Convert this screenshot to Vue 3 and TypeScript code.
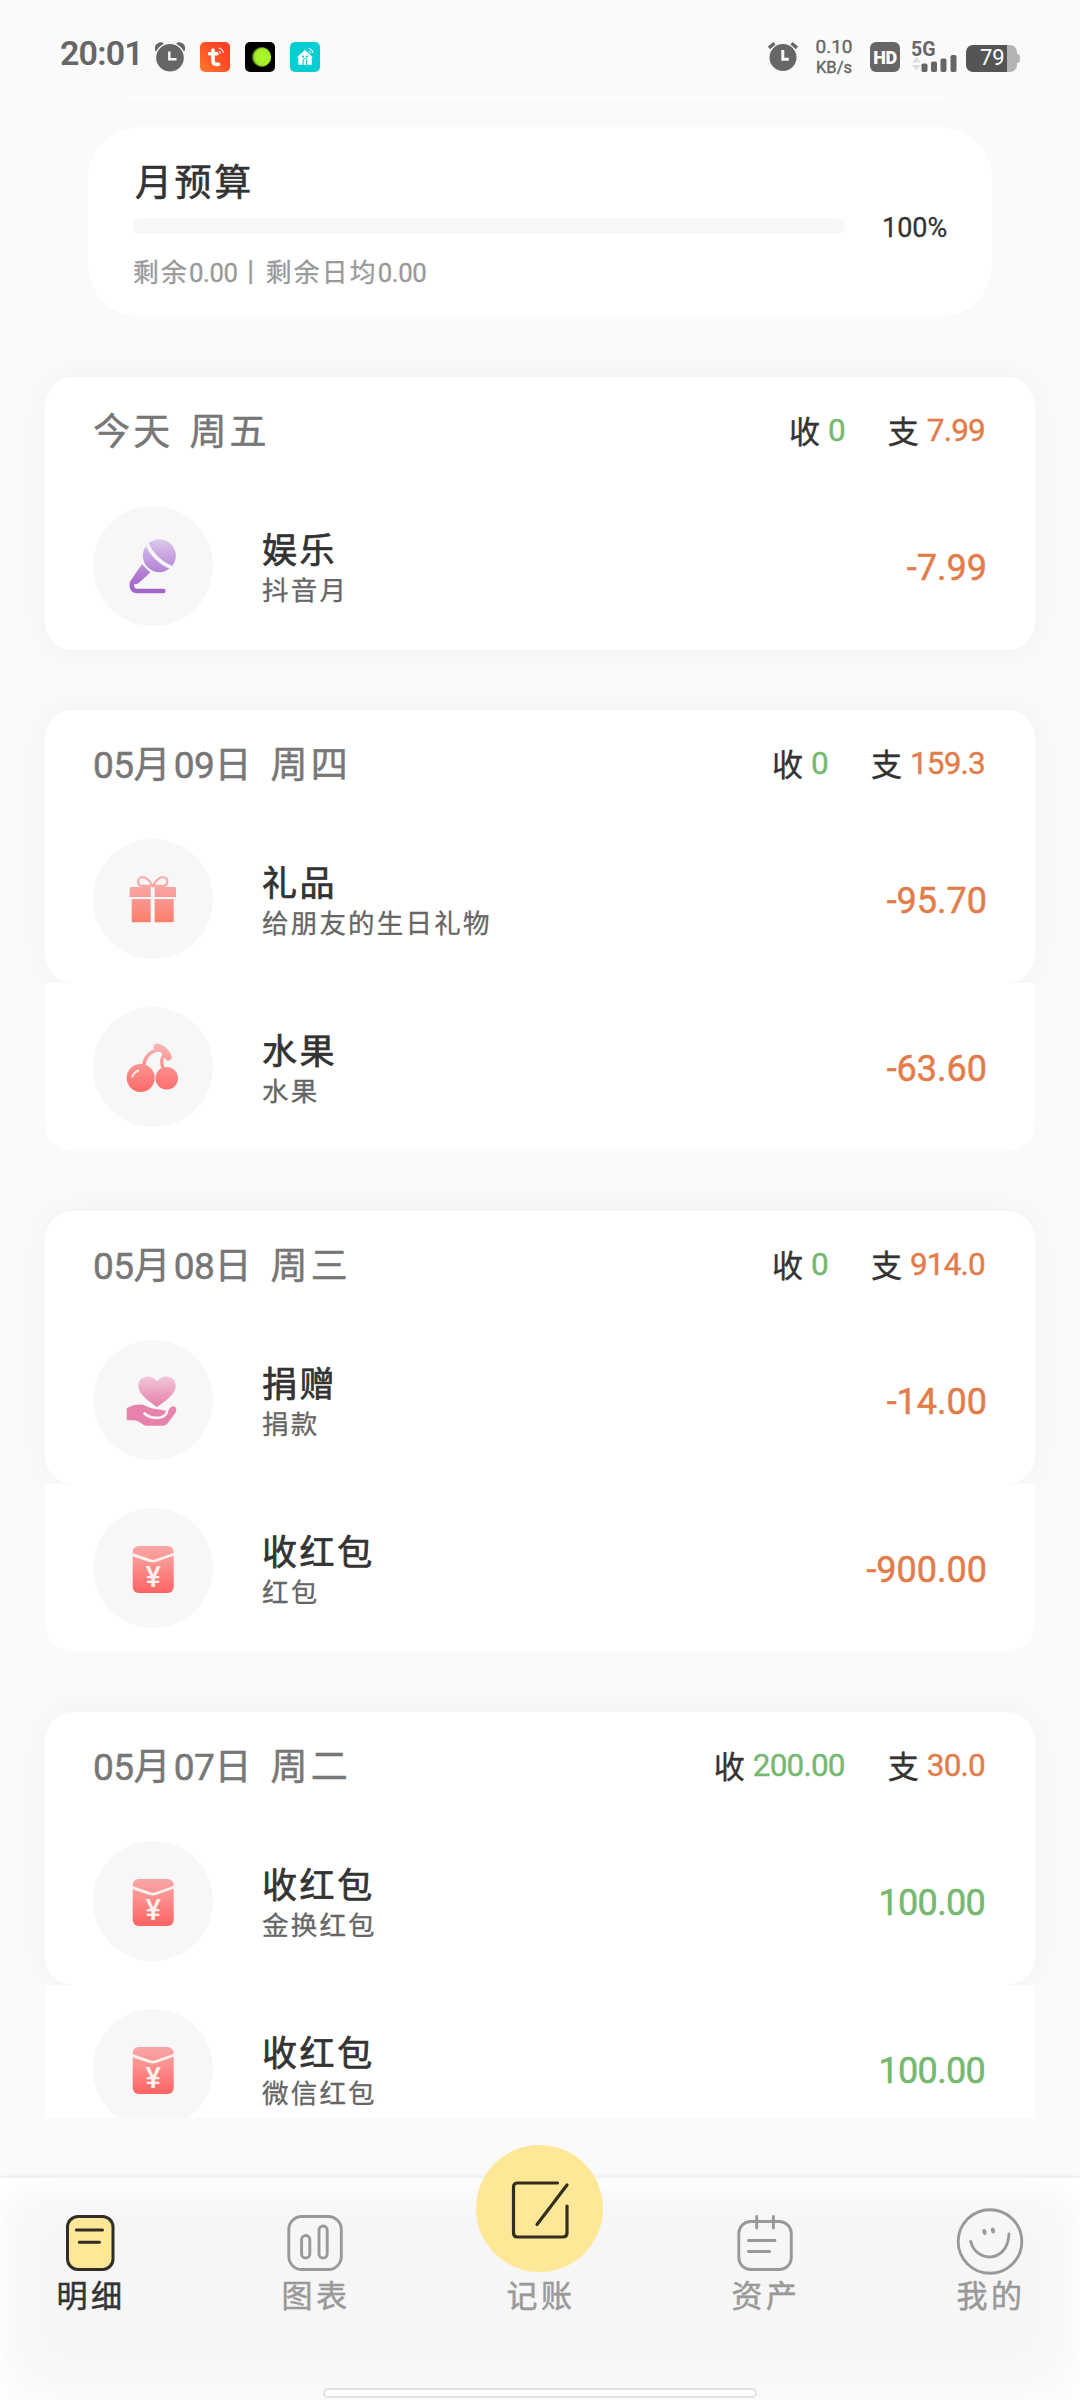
<script setup lang="ts">
import { h } from 'vue'
import type { FunctionalComponent } from 'vue'

type IconName = 'mic' | 'gift' | 'cherry' | 'donate' | 'packet'

interface Entry {
  icon: IconName
  name: string
  note: string
  amount: string
}

interface Day {
  date: string
  income: string
  expense: string
  entries: Entry[]
}

const days: Day[] = [
  {
    date: '今天 周五',
    income: '0',
    expense: '7.99',
    entries: [{ icon: 'mic', name: '娱乐', note: '抖音月', amount: '-7.99' }],
  },
  {
    date: '05月09日 周四',
    income: '0',
    expense: '159.3',
    entries: [
      { icon: 'gift', name: '礼品', note: '给朋友的生日礼物', amount: '-95.70' },
      { icon: 'cherry', name: '水果', note: '水果', amount: '-63.60' },
    ],
  },
  {
    date: '05月08日 周三',
    income: '0',
    expense: '914.0',
    entries: [
      { icon: 'donate', name: '捐赠', note: '捐款', amount: '-14.00' },
      { icon: 'packet', name: '收红包', note: '红包', amount: '-900.00' },
    ],
  },
  {
    date: '05月07日 周二',
    income: '200.00',
    expense: '30.0',
    entries: [
      { icon: 'packet', name: '收红包', note: '金换红包', amount: '100.00' },
      { icon: 'packet', name: '收红包', note: '微信红包', amount: '100.00' },
    ],
  },
]

// Splits a string into Latin and Chinese runs, so only the Chinese runs are tracked out.
const Mixed: FunctionalComponent<{ text: string }> = (props) =>
  h(
    'span',
    { style: 'white-space: pre' },
    (props.text.match(/[\u4e00-\u9fff]+|[^\u4e00-\u9fff]+/g) ?? []).map((run) =>
      h('span', { class: /[\u4e00-\u9fff]/.test(run) ? 'run-cjk' : run === ' ' ? 'run-gap' : 'run-latin' }, run),
    ),
  )
Mixed.props = ['text']
</script>

<template>
  <div class="screen">
    <svg width="0" height="0" class="defs" aria-hidden="true">
      <defs>
        <linearGradient id="g-mic" gradientUnits="userSpaceOnUse" x1="0" y1="33" x2="0" y2="88">
          <stop offset="0" stop-color="#dccaea" /><stop offset=".45" stop-color="#bd93dc" /><stop offset=".75" stop-color="#aa70d0" /><stop offset="1" stop-color="#a162c6" />
        </linearGradient>
        <linearGradient id="g-gift" gradientUnits="userSpaceOnUse" x1="0" y1="37" x2="0" y2="84">
          <stop offset="0" stop-color="#f7b4b2" /><stop offset=".45" stop-color="#f99a94" /><stop offset="1" stop-color="#fd7d6b" />
        </linearGradient>
        <linearGradient id="g-cherry" gradientUnits="userSpaceOnUse" x1="0" y1="36" x2="0" y2="85">
          <stop offset="0" stop-color="#f8b9b7" /><stop offset=".5" stop-color="#fb8f8c" /><stop offset="1" stop-color="#ff6a6a" />
        </linearGradient>
        <linearGradient id="g-heart" gradientUnits="userSpaceOnUse" x1="0" y1="36" x2="0" y2="68">
          <stop offset="0" stop-color="#f1c8db" /><stop offset="1" stop-color="#e67ca8" />
        </linearGradient>
        <linearGradient id="g-packet" gradientUnits="userSpaceOnUse" x1="0" y1="38" x2="0" y2="85">
          <stop offset="0" stop-color="#f9a5a4" /><stop offset=".35" stop-color="#fa9492" /><stop offset="1" stop-color="#ff6363" />
        </linearGradient>
        <linearGradient id="g-tuya" x1="0" y1="1" x2="1" y2="0">
          <stop offset="0" stop-color="#ff7a2a" /><stop offset=".5" stop-color="#ff5226" /><stop offset="1" stop-color="#f93a28" />
        </linearGradient>
        <radialGradient id="g-lime" cx=".6" cy=".5" r=".5">
          <stop offset="0" stop-color="#adf82c" /><stop offset=".78" stop-color="#a4ec2a" /><stop offset="1" stop-color="#a4ec2a" stop-opacity="0" />
        </radialGradient>
      </defs>
    </svg>

    <header class="status">
      <div class="status-left">
        <span class="clock">20:01</span>
        <svg width="30" height="30" viewBox="0 0 30 30">
          <path d="M.8 9.500A6 6 0 0 1 9 1.200ZM29.200 9.500A6 6 0 0 0 21 1.200Z" fill="#666" />
          <circle cx="15" cy="15.700" r="14.400" fill="#666" stroke="#fafafa" stroke-width="1.200" />
          <path d="M14.300 9.500V17.300H21.500" fill="none" stroke="#fafafa" stroke-width="2.400" />
        </svg>
        <svg width="30" height="30" viewBox="0 0 30 30">
          <rect width="30" height="30" rx="5" fill="url(#g-tuya)" />
          <path d="M13 8V19.500Q13 23 18.500 22.300M9.500 11.800H17" fill="none" stroke="#fff" stroke-width="3.600" stroke-linecap="round" />
          <path d="M18.800 9.300A2.600 2.600 0 0 1 20.600 11.500M18.800 6A6 6 0 0 1 23.400 11" fill="none" stroke="#fff" stroke-width="1.200" />
        </svg>
        <svg width="30" height="30" viewBox="0 0 30 30">
          <rect width="30" height="30" rx="5" fill="#000" />
          <circle cx="14.500" cy="15" r="10.500" fill="url(#g-lime)" opacity=".6" />
          <circle cx="15.800" cy="15" r="10.400" fill="url(#g-lime)" />
        </svg>
        <svg width="30" height="30" viewBox="0 0 30 30">
          <rect width="30" height="30" rx="5" fill="#08cdd2" />
          <path d="M15 8 6.800 15.200H8.300V22.800H12.600V18.300A2.300 2.300 0 0 1 17.200 18.300V22.800H21.800V15.200H23Z" fill="#fff" />
          <circle cx="13" cy="14.600" r="1.100" fill="#08cdd2" /><circle cx="16.800" cy="14.600" r="1.100" fill="#08cdd2" />
          <path d="M14.900 17V23" stroke="#fff" stroke-width="2.400" />
          <path d="M18.800 9.300A2.600 2.600 0 0 1 20.600 11.500M18.800 6.500A5.500 5.500 0 0 1 23 11" fill="none" stroke="#fff" stroke-width="1.200" />
        </svg>
      </div>
      <div class="status-right">
        <svg width="30" height="30" viewBox="0 0 30 30">
          <circle cx="15" cy="16.500" r="13.500" fill="#666" />
          <path d="M1 7 6.500 2.200M29 7 23.500 2.200" stroke="#666" stroke-width="3.400" />
          <path d="M14.800 9V18.300H20.800" fill="none" stroke="#fafafa" stroke-width="3" />
        </svg>
        <div class="speed"><span>0.10</span><span class="unit">KB/s</span></div>
        <span class="hd">HD</span>
        <div class="signal">
          <span>5G</span>
          <svg width="46" height="17" viewBox="0 0 46 17">
            <path d="M0 7.500 4.500 2 9 7.500ZM0 10 4.500 15.500 9 10Z" fill="#ddd" />
            <g fill="#666"><rect x="9.500" y="8.500" width="6" height="8.500" rx="1.800" /><rect x="19" y="6.500" width="6" height="10.500" rx="1.800" /><rect x="28.500" y="3.500" width="6" height="13.500" rx="1.800" /><rect x="38.500" y="0" width="6" height="17" rx="1.800" /></g>
          </svg>
        </div>
        <div class="battery"><span class="level">79</span></div>
      </div>
    </header>
    <div class="rule"></div>

    <main class="scroll">
      <section class="budget">
        <h2><Mixed text="月预算" /></h2>
        <div class="meter-row">
          <div class="meter"></div>
          <span>100%</span>
        </div>
        <p><Mixed text="剩余0.00丨剩余日均0.00" /></p>
      </section>

      <section v-for="day in days" :key="day.date" class="day">
        <div class="lead">
          <div class="day-head">
            <span class="date"><Mixed :text="day.date" /></span>
            <span class="label">收</span><span class="sum in">{{ day.income }}</span>
            <span class="label out-label">支</span><span class="sum out">{{ day.expense }}</span>
          </div>
        </div>
        <div v-for="(entry, i) in day.entries" :key="i" class="entry" :class="{ first: i === 0 }">
          <svg class="badge" width="120" height="120" viewBox="0 0 120 120">
            <circle cx="60" cy="60" r="60" fill="#f7f7f7" />
            <g v-if="entry.icon === 'mic'">
              <circle cx="66.300" cy="49.700" r="16.500" fill="url(#g-mic)" />
              <path d="M53.500 37Q61 54.500 79 61.800" fill="none" stroke="#f7f7f7" stroke-width="3.600" />
              <path d="M49 58.300 57.300 66.500 46.500 76.300Q43.500 79.300 40.300 77.500L38.500 75.500Q39 72.500 42 68Z" fill="url(#g-mic)" />
              <path d="M40.500 74.500C37.500 78 38.300 85 44 85H70.300" fill="none" stroke="url(#g-mic)" stroke-width="4.600" stroke-linecap="round" />
            </g>
            <g v-else-if="entry.icon === 'gift'">
              <path d="M59.700 47C55 39 51 37.800 48.500 38.300C43.500 39.500 44.300 46.500 49 46.800H70.500C75 46.500 76 39.500 71 38.300C68.500 37.800 64.500 39 59.700 47Z" fill="none" stroke="url(#g-gift)" stroke-width="2.200" />
              <path d="M38 48H57.700V58H36.700V49.300Q36.700 48 38 48ZM61.700 48H81.700Q83 48 83 49.300V58H61.700ZM38.700 60H57.700V83.300H39.700Q38.700 83.300 38.700 82.300ZM61.700 60H80.700V82.300Q80.700 83.300 79.700 83.300H61.700Z" fill="url(#g-gift)" />
            </g>
            <g v-else-if="entry.icon === 'cherry'">
              <path d="M50.500 59C52 50 57 44 65.500 43M70.300 62Q66.800 54 71 47.500" fill="none" stroke="url(#g-cherry)" stroke-width="3.400" />
              <path d="M64 40Q71.500 41.500 75.300 50" fill="none" stroke="url(#g-cherry)" stroke-width="7" stroke-linecap="round" />
              <circle cx="47.700" cy="71" r="14" fill="url(#g-cherry)" /><circle cx="73.700" cy="71.300" r="11.300" fill="url(#g-cherry)" />
              <path d="M39.300 69.500Q41 65.300 45.300 63.600" fill="none" stroke="#fbe9e8" stroke-width="2" stroke-linecap="round" />
            </g>
            <g v-else-if="entry.icon === 'donate'">
              <path d="M64 67C56 61.500 45.300 54 45.300 46C45.300 36 58 33 64 41.500C70 33 82.700 36 82.700 46C82.700 54 72 61.500 64 67Z" fill="url(#g-heart)" />
              <path d="M35 67.500C41 64.500 48 63.500 53 66Q58 68.500 66 69.500Q72.500 70.500 74.500 71L78 67Q81 65 83 68Q84 70.500 82.300 73L74.500 83.500Q72.500 85.800 70 85.800H54Q51 85.800 48.500 83.500Q45.500 80.500 40 80.300H34.800Q33.700 80.300 33.700 79V69.500Q33.700 68 35 67.500Z" fill="#e782ac" />
              <path d="M51.500 73.500Q57 78.500 66 77.800Q74 77 74.500 69" fill="none" stroke="#f7f7f7" stroke-width="2.600" stroke-linecap="round" />
            </g>
            <g v-else>
              <rect x="39.700" y="38" width="41" height="47" rx="6" fill="url(#g-packet)" />
              <path d="M39 46.500 57 52.500Q60 53.800 63 52.500L81.500 46" fill="none" stroke="#fdf0ef" stroke-width="2.900" />
              <text x="60.200" y="78.700" text-anchor="middle" class="yen">¥</text>
            </g>
          </svg>
          <div class="words">
            <span class="name">{{ entry.name }}</span>
            <span class="note">{{ entry.note }}</span>
          </div>
          <span class="amount" :class="entry.amount.startsWith('-') ? 'out' : 'in'">{{ entry.amount }}</span>
        </div>
      </section>
    </main>

    <nav class="tabs">
      <div class="tab active">
        <svg width="68" height="68" viewBox="0 0 68 68">
          <rect x="11.500" y="9.500" width="45.500" height="53" rx="10.500" fill="#fee797" stroke="#302e26" stroke-width="3" />
          <path d="M20.300 23H46.500M23.300 35.300H43.500" stroke="#302e26" stroke-width="3" stroke-linecap="round" />
        </svg>
        <span>明细</span>
      </div>
      <div class="tab">
        <svg width="68" height="68" viewBox="0 0 68 68" fill="none" stroke="#999" stroke-width="2.900">
          <rect x="7.800" y="9.500" width="52.500" height="53" rx="13" /><rect x="20.600" y="28.500" width="8.200" height="22.500" rx="4.100" /><rect x="38" y="19" width="8.200" height="32" rx="4.100" />
        </svg>
        <span>图表</span>
      </div>
      <div class="tab">
        <div class="fab">
          <svg width="60" height="60" viewBox="0 0 60 60" fill="none" stroke="#332f1f" stroke-width="3.200" stroke-linecap="round" stroke-linejoin="round">
            <path d="M47.500 4H7.500Q3.500 4 3.500 8V54Q3.500 58 7.500 58H53Q57 58 57 54V27M57 6 27 45.500" />
          </svg>
        </div>
        <span>记账</span>
      </div>
      <div class="tab">
        <svg width="68" height="68" viewBox="0 0 68 68" fill="none" stroke="#999" stroke-width="2.900">
          <rect x="7.800" y="14.500" width="52.500" height="48" rx="12" /><path d="M25.700 9.500V21M42.400 9.500V21M17.500 33.500H44M17.500 44.500H38.500" stroke-linecap="round" />
        </svg>
        <span>资产</span>
      </div>
      <div class="tab">
        <svg width="68" height="68" viewBox="0 0 68 68" fill="none" stroke="#999" stroke-width="2.900" stroke-linecap="round">
          <circle cx="34" cy="34.500" r="31.800" />
          <path d="M14.800 34.500C19.500 55.500 51.500 57 53 27" />
          <ellipse cx="28.500" cy="25" rx="1.200" ry="2.200" transform="rotate(-12 28.500 25)" fill="#999" stroke-width="1.600" /><ellipse cx="37" cy="23.500" rx="1.200" ry="2.200" transform="rotate(-12 37 23.500)" fill="#999" stroke-width="1.600" />
        </svg>
        <span>我的</span>
      </div>
      <div class="home-bar"></div>
    </nav>
  </div>
</template>

<style>
body {
  background: #fafafa;
}
.run-cjk {
  letter-spacing: var(--track, 3px);
}
.run-latin {
  letter-spacing: var(--latin-track, 0);
}
.run-gap {
  display: inline-block;
  width: 16px;
}
</style>

<style scoped>
.screen {
  width: 1080px;
  height: 2400px;
  display: flex;
  flex-direction: column;
  overflow: hidden;
  background: #fafafa;
  color: #333;
  font-family: Roboto, 'Noto Sans CJK SC', sans-serif;
}
.screen svg {
  display: block;
  flex: none;
}
.defs {
  position: absolute;
}

.status {
  height: 96px;
  box-sizing: border-box;
  padding: 41px 60px 0 60px;
  display: flex;
  justify-content: space-between;
  align-items: flex-start;
  color: #666;
}
.status-left {
  display: flex;
  gap: 15px;
}
.clock {
  width: 80px;
  font-size: 34px;
  font-weight: 600;
  line-height: 25px;
  letter-spacing: -0.8px;
  white-space: nowrap;
}
.status-left svg {
  margin-top: 1px;
}
.status-right {
  display: flex;
}
.status-right > svg {
  margin-right: 18px;
}
.speed {
  width: 36px;
  margin: -4px 18px 0 0;
  display: flex;
  flex-direction: column;
  align-items: center;
  font-size: 19px;
  line-height: 20px;
  -webkit-text-stroke: 0.4px currentColor;
}
.speed .unit {
  font-size: 16.5px;
  line-height: 22px;
}
.hd {
  width: 30px;
  height: 30px;
  margin: 1px 12px 0 0;
  border-radius: 6px;
  background: #666;
  color: #fff;
  font-size: 18px;
  font-weight: 900;
  line-height: 31px;
  text-align: center;
  letter-spacing: -0.5px;
}
.signal {
  width: 46px;
  margin-right: 8px;
}
.signal span {
  display: block;
  height: 14px;
  margin-left: -1px;
  font-size: 19.5px;
  font-weight: 700;
  line-height: 17px;
}
.battery {
  width: 51px;
  height: 27px;
  margin: 4px 3px 0 0;
  border-radius: 7px;
  background: linear-gradient(90deg, #555 41px, #b3b3b3 41px);
  position: relative;
  color: #fff;
}
.battery::after {
  content: '';
  position: absolute;
  left: 51px;
  top: 9px;
  width: 3px;
  height: 9px;
  border-radius: 0 3px 3px 0;
  background: #b3b3b3;
}
.level {
  display: block;
  padding-left: 14px;
  font-size: 22px;
  line-height: 25px;
}
.rule {
  flex: none;
  width: 816px;
  height: 3px;
  margin-left: 128px;
  background: #fff;
}

.scroll {
  height: 2019px;
  flex: none;
  overflow: hidden;
}
.budget {
  height: 190px;
  box-sizing: border-box;
  margin: 28px 88px 60px;
  padding: 37px 0 0 44px;
  border-radius: 52px;
  background: #fff;
  box-shadow: 0 0 20px rgba(0, 0, 0, 0.008);
}
.budget h2 {
  --track: 2.6px;
  margin: 0 0 0 3px;
  font-size: 37px;
  font-weight: 400;
  line-height: 40px;
  -webkit-text-stroke: 0.6px currentColor;
}
.meter-row {
  height: 20px;
  margin-top: 12px;
  display: flex;
  align-items: center;
}
.meter {
  width: 713px;
  height: 16px;
  margin-right: 37px;
  border-radius: 8px;
  background: #f7f7f7;
}
.meter-row span {
  padding-top: 3px;
  font-size: 27px;
  -webkit-text-stroke: 0.3px currentColor;
}
.budget p {
  --track: 2.2px;
  --latin-track: -0.4px;
  margin: 20px 0 0 1px;
  color: #999;
  font-size: 25.8px;
  line-height: 34px;
  -webkit-text-stroke: 0.3px currentColor;
}

.day {
  margin: 0 45px 60px;
}
.lead {
  height: 273px;
  margin-bottom: -168px;
  border-radius: 28px;
  background: #fff;
  box-shadow: 0 0 32px rgba(0, 0, 0, 0.045);
}
.day-head {
  height: 110px;
  box-sizing: border-box;
  padding: 0 50px 0 48px;
  display: flex;
  align-items: center;
}
.date {
  --track: 3.2px;
  --latin-track: -0.5px;
  flex: 1;
  padding-top: 1px;
  color: #777;
  font-size: 37px;
  line-height: 40px;
  -webkit-text-stroke: 0.5px currentColor;
}
.label {
  margin-top: -6px;
  font-size: 31px;
  -webkit-text-stroke: 0.4px currentColor;
}
.sum {
  margin: -3px 0 0 8px;
  font-size: 31.5px;
  letter-spacing: -0.8px;
  -webkit-text-stroke: 0.4px currentColor;
}
.out-label {
  margin-left: 43px;
}
.in {
  color: #75b86f;
}
.out {
  color: #e27c4a;
}
.entry {
  height: 168px;
  box-sizing: border-box;
  padding: 0 48px 0 48px;
  display: flex;
  align-items: center;
  background: #fff;
  position: relative;
}
.entry.first {
  background: none;
}
.entry:last-child:not(.first) {
  border-radius: 0 0 28px 28px;
}
.words {
  margin-left: 49px;
  padding-top: 5px;
  flex: 1;
  display: flex;
  flex-direction: column;
}
.name {
  font-size: 35px;
  line-height: 45px;
  letter-spacing: 2.6px;
  -webkit-text-stroke: 0.7px currentColor;
}
.note {
  color: #666;
  font-size: 26.5px;
  line-height: 34px;
  letter-spacing: 2.2px;
  -webkit-text-stroke: 0.3px currentColor;
}
.amount {
  padding-top: 4px;
  font-size: 36px;
  -webkit-text-stroke: 0.5px currentColor;
}
.amount.in {
  letter-spacing: -0.7px;
  margin-right: 2px;
}
.yen {
  fill: #fdf0ef;
  font-size: 29px;
  font-weight: 500;
}

.tabs {
  height: 222px;
  box-sizing: border-box;
  flex: none;
  margin-top: 60px;
  padding: 29px 53px 0 52px;
  display: flex;
  justify-content: space-between;
  align-items: flex-start;
  position: relative;
  background: #f6f6f6;
  box-shadow: inset 0 0 70px #fff, inset 0 8px 24px #fff, 0 -1px 5px rgba(0, 0, 0, 0.07);
}
.tab {
  width: 75px;
  display: flex;
  flex-direction: column;
  align-items: center;
  color: #999;
}
.tab span {
  margin-top: 2px;
  font-size: 31px;
  line-height: 40px;
  letter-spacing: 3.4px;
  margin-right: -3px;
  white-space: nowrap;
  -webkit-text-stroke: 0.5px currentColor;
}
.tab.active {
  color: #333;
}
.fab {
  width: 127px;
  height: 127px;
  margin: -62px -26px 3px;
  border-radius: 50%;
  display: flex;
  align-items: center;
  justify-content: center;
  background: #fee797;
}
.home-bar {
  position: absolute;
  left: 323px;
  bottom: 2px;
  width: 430px;
  height: 6px;
  border: 2px solid #e2e2e2;
  border-radius: 6px;
  background: #fff;
}
</style>
